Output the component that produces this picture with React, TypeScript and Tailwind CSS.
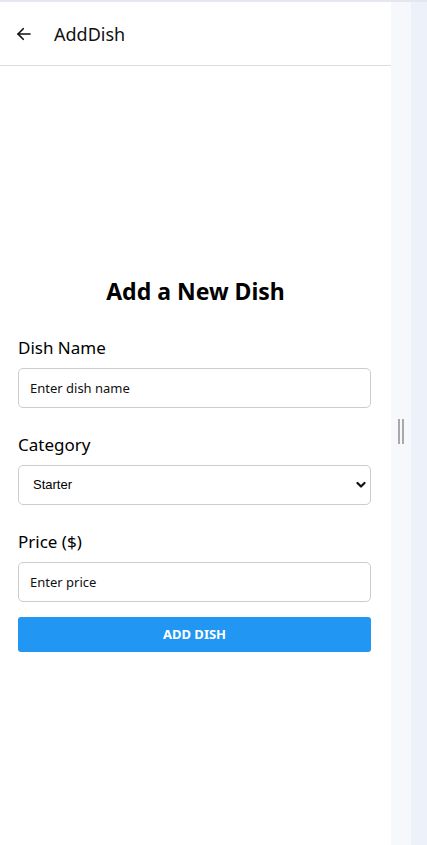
import { useState } from 'react'

export default function App() {
  const [name, setName] = useState('')
  const [category, setCategory] = useState('Starter')
  const [price, setPrice] = useState('')

  return (
    <div className="flex flex-col h-[845px] bg-[#edf1f9] font-['Noto_Sans',sans-serif] text-black">
      <div className="h-[2px] bg-[#e4e7ee]" />
      <div className="flex flex-1">
        <div className="flex flex-col w-[391px] bg-white">
          <header className="flex items-center h-[64px] border-b border-[#dcdcdc] px-[15px]">
            <svg width="18" height="18" viewBox="0 0 24 24" fill="none" stroke="#111" strokeWidth="2.2" strokeLinecap="round" strokeLinejoin="round">
              <path d="M20 12H4" />
              <path d="M11 5l-7 7 7 7" />
            </svg>
            <span className="ml-[21px] text-[18px] leading-none text-[#111]">AddDish</span>
          </header>
          <form className="flex flex-col px-[18px] pt-[210px]" onSubmit={e => e.preventDefault()}>
            <h1 className="text-center text-[23px] font-bold leading-[30px] mb-[30px]">Add a New Dish</h1>
            <label className="text-[17px] leading-[24px] mb-[8px]">Dish Name</label>
            <input
              value={name}
              onChange={e => setName(e.target.value)}
              placeholder="Enter dish name"
              className="h-[40px] w-[353px] border border-[#cccccc] rounded-[5px] px-[11px] text-[13px] placeholder:text-[#111] outline-none"
            />
            <label className="text-[17px] leading-[24px] mt-[25px] mb-[8px]">Category</label>
            <div className="relative w-[353px]">
              <select
                value={category}
                onChange={e => setCategory(e.target.value)}
                className="appearance-none h-[40px] w-full border border-[#cccccc] rounded-[5px] pl-[14px] text-[13px] font-['Liberation_Sans',sans-serif] bg-white outline-none"
              >
                <option>Starter</option>
                <option>Main Course</option>
                <option>Dessert</option>
              </select>
              <svg className="absolute right-[5px] top-[16px]" width="10" height="8" viewBox="0 0 10 8" fill="none" stroke="#111" strokeWidth="2.2" strokeLinecap="round" strokeLinejoin="round">
                <path d="M1.5 2l3.5 3.5L8.5 2" />
              </svg>
            </div>
            <label className="text-[17px] leading-[24px] mt-[25px] mb-[8px]">Price ($)</label>
            <input
              value={price}
              onChange={e => setPrice(e.target.value)}
              placeholder="Enter price"
              className="h-[40px] w-[353px] border border-[#cccccc] rounded-[5px] px-[11px] text-[13px] placeholder:text-[#111] outline-none"
            />
            <button type="submit" className="mt-[15px] h-[35px] w-[353px] rounded-[3px] bg-[#2196f3] text-white text-[13px] font-bold">
              ADD DISH
            </button>
          </form>
        </div>
        <div className="flex items-center justify-center w-[20px] bg-[#f7f8fc]">
          <div className="flex gap-[2px] mt-[16px]">
            <div className="w-[2px] h-[25px] bg-[#a9a9a9]" />
            <div className="w-[2px] h-[25px] bg-[#a9a9a9]" />
          </div>
        </div>
        <div className="flex-1" />
      </div>
    </div>
  )
}
